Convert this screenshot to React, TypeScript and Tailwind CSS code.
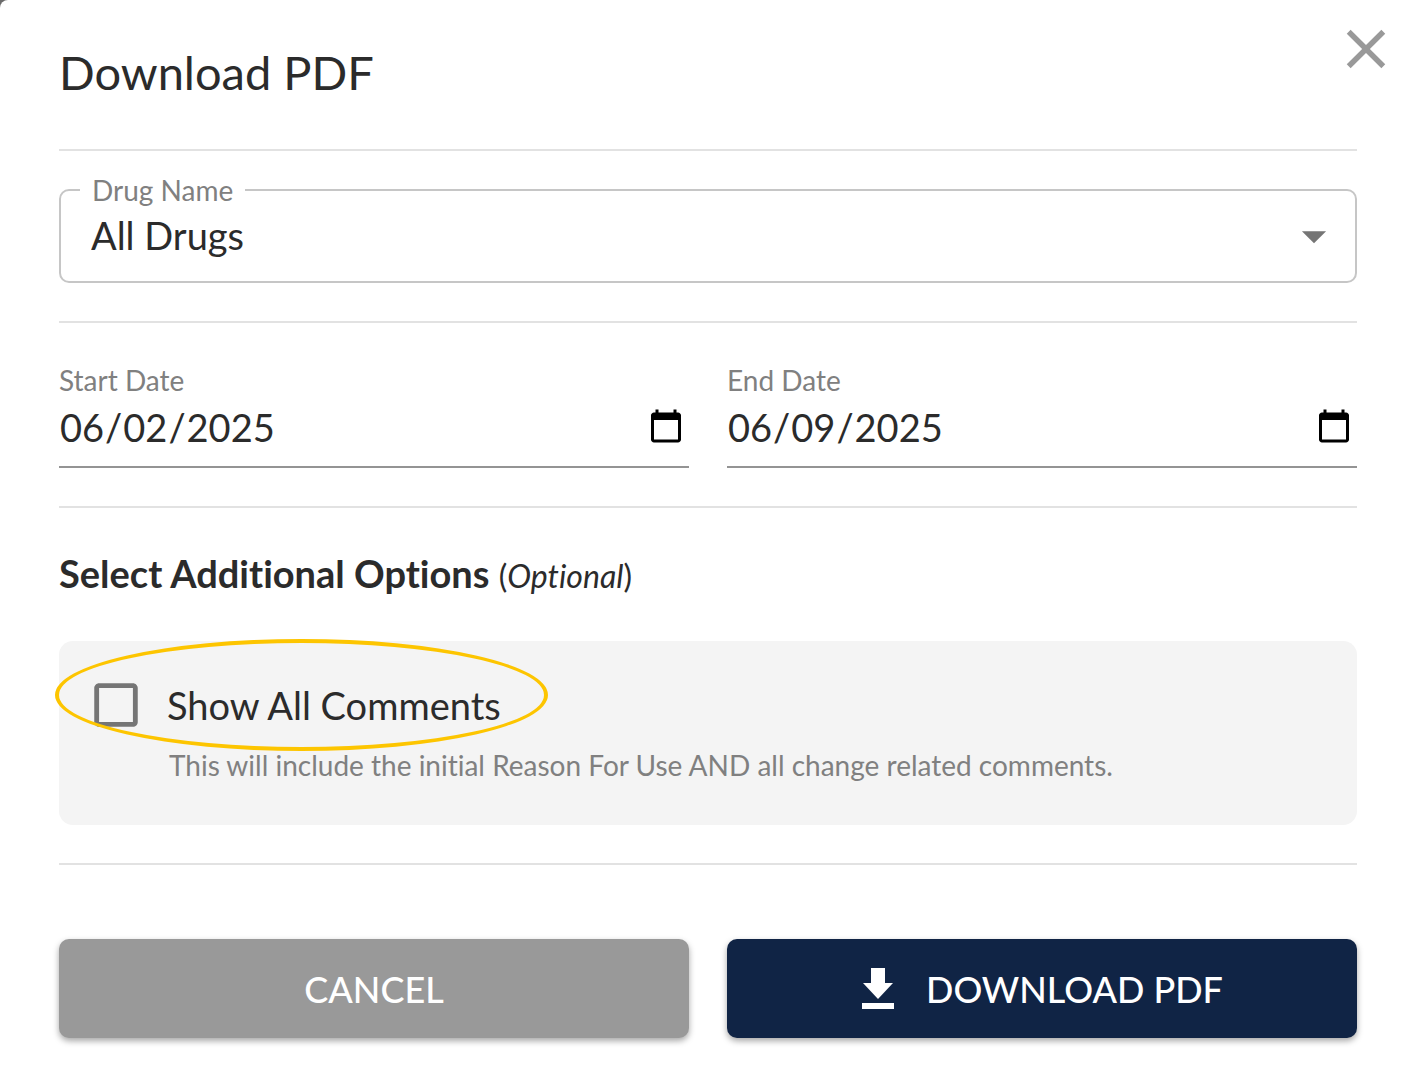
import { useState } from "react";
import { MdArrowDropDown, MdCheckBoxOutlineBlank, MdCheckBox, MdClose } from "react-icons/md";

const DRUGS = ["All Drugs"];

function Divider() {
  return <hr className="border-t-2 border-[#e2e2e2]" />;
}

function DownloadIcon() {
  return (
    <svg viewBox="0 0 34 44" className="h-[44px] w-[34px]" fill="currentColor" aria-hidden="true">
      <path d="M10 1h14v15h8L17 32 2 16h8z" />
      <path d="M1 36h32v6H1z" />
    </svg>
  );
}

type DateFieldProps = {
  id: string;
  label: string;
  value: string;
  onChange: (value: string) => void;
};

function DateField({ id, label, value, onChange }: DateFieldProps) {
  return (
    <div className="flex flex-col border-b-2 border-[#949494]">
      <label htmlFor={id} className="text-[28px] leading-8 text-[#808080]">
        {label}
      </label>
      <input
        id={id}
        type="date"
        value={value}
        onChange={(e) => onChange(e.target.value)}
        className="h-[70px] w-full bg-transparent pr-0.5 pb-2 text-[38px] text-[#2b2b2b] outline-none"
      />
    </div>
  );
}

export default function App() {
  const [drug, setDrug] = useState("All Drugs");
  const [start, setStart] = useState("2025-06-02");
  const [end, setEnd] = useState("2025-06-09");
  const [showComments, setShowComments] = useState(false);

  return (
    <div className="min-h-screen bg-[#6b6b6b] font-['Lato','Open_Sans',sans-serif] [font-variant-ligatures:none]">
      <main className="min-h-screen rounded-tl-lg bg-white pr-[57px] pl-[59px] text-[#2b2b2b]">
        {/* Title bar */}
        <header className="flex items-start justify-between pt-[42px]">
          <h1 className="h-[107px] text-[47px] leading-[60px]">Download PDF</h1>
          <button type="button" aria-label="Close" className="-mt-[26px] -mr-[42px] text-[#999]">
            <MdClose size={66} />
          </button>
        </header>
        <Divider />

        {/* Drug select with a notched outline */}
        <div className="pt-6 pb-[38px]">
          <fieldset className="relative rounded-[10px] border-2 border-[#c6c6c6]">
            <legend className="ml-[19px] px-[12px] text-[28px] leading-[30px] text-[#808080]">
              <label htmlFor="drug">Drug Name</label>
            </legend>
            <select
              id="drug"
              value={drug}
              onChange={(e) => setDrug(e.target.value)}
              className="mb-4 h-[60px] w-full appearance-none bg-transparent px-[30px] text-[38px] outline-none"
            >
              {DRUGS.map((name) => (
                <option key={name}>{name}</option>
              ))}
            </select>
            <MdArrowDropDown size={58} className="pointer-events-none absolute right-3 bottom-4 text-[#757575]" />
          </fieldset>
        </div>
        <Divider />

        {/* Date range */}
        <div className="grid grid-cols-2 gap-[38px] pt-[41px] pb-[38px]">
          <DateField id="start" label="Start Date" value={start} onChange={setStart} />
          <DateField id="end" label="End Date" value={end} onChange={setEnd} />
        </div>
        <Divider />

        <h2 className="pt-10 text-[38px] leading-[50px] font-bold">
          Select Additional Options{" "}
          <span className="text-[32px] font-normal">
            (<em>Optional</em>)
          </span>
        </h2>

        <section className="relative mt-10 mb-[38px] h-[184px] rounded-[14px] bg-[#f4f4f4] pt-8 pl-8">
          <label className="flex h-16 items-center gap-[22px] text-[38px]">
            <input
              type="checkbox"
              checked={showComments}
              onChange={(e) => setShowComments(e.target.checked)}
              aria-describedby="comments-hint"
              className="sr-only"
            />
            {showComments ? (
              <MdCheckBox size={58} className="-ml-1 text-[#757575]" />
            ) : (
              <MdCheckBoxOutlineBlank size={58} className="-ml-1 text-[#757575]" />
            )}
            Show All Comments
          </label>
          <p id="comments-hint" className="mt-3 pl-[78px] text-[28px] leading-8 text-[#808080]">
            This will include the initial Reason For Use AND all change related comments.
          </p>
          {/* Highlight ring drawn over the option */}
          <div className="pointer-events-none absolute -top-0.5 -left-1 h-[112px] w-[493px] rounded-[50%] border-4 border-[#fdc500]" />
        </section>
        <Divider />

        <footer className="grid grid-cols-2 gap-[38px] pt-[74px] pb-12 text-[36px] font-medium text-white">
          <button
            type="button"
            className="h-[99px] rounded-[10px] bg-[#999] shadow-[0_3px_6px_rgba(0,0,0,0.35)]"
          >
            CANCEL
          </button>
          <button
            type="button"
            className="flex h-[99px] items-center justify-center gap-[31px] rounded-[10px] bg-[#102445] shadow-[0_3px_6px_rgba(0,0,0,0.35)]"
          >
            <DownloadIcon />
            DOWNLOAD PDF
          </button>
        </footer>
      </main>
    </div>
  );
}
